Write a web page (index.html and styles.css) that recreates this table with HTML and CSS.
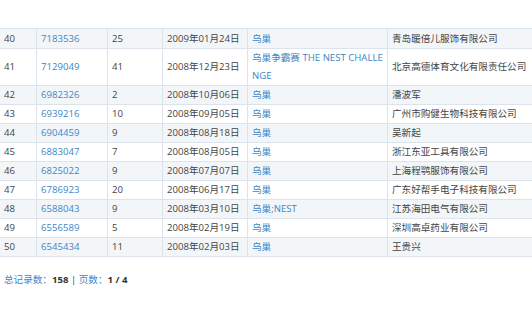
FILE: index.html
```html
<!DOCTYPE html>
<html>
<head>
<meta charset="utf-8">
<link rel="stylesheet" href="styles.css">
</head>
<body>
<table class="grid">
  <colgroup>
    <col class="c1"><col class="c2"><col class="c3"><col class="c4"><col class="c5"><col class="c6">
  </colgroup>
  <tr class="alt"><td>40</td><td><a>7183536</a></td><td>25</td><td>2009年01月24日</td><td><a>乌巢</a></td><td>青岛暖倍儿服饰有限公司</td></tr>
  <tr><td>41</td><td><a>7129049</a></td><td>41</td><td>2008年12月23日</td><td><a>乌巢争霸赛 THE NEST CHALLENGE</a></td><td>北京高德体育文化有限责任公司</td></tr>
  <tr class="alt"><td>42</td><td><a>6982326</a></td><td>2</td><td>2008年10月06日</td><td><a>乌巢</a></td><td>潘波军</td></tr>
  <tr><td>43</td><td><a>6939216</a></td><td>10</td><td>2008年09月05日</td><td><a>乌巢</a></td><td>广州市购健生物科技有限公司</td></tr>
  <tr class="alt"><td>44</td><td><a>6904459</a></td><td>9</td><td>2008年08月18日</td><td><a>乌巢</a></td><td>吴新起</td></tr>
  <tr><td>45</td><td><a>6883047</a></td><td>7</td><td>2008年08月05日</td><td><a>乌巢</a></td><td>浙江东亚工具有限公司</td></tr>
  <tr class="alt"><td>46</td><td><a>6825022</a></td><td>9</td><td>2008年07月07日</td><td><a>乌巢</a></td><td>上海程鹗服饰有限公司</td></tr>
  <tr><td>47</td><td><a>6786923</a></td><td>20</td><td>2008年06月17日</td><td><a>乌巢</a></td><td>广东好帮手电子科技有限公司</td></tr>
  <tr class="alt"><td>48</td><td><a>6588043</a></td><td>9</td><td>2008年03月10日</td><td><a>乌巢;NEST</a></td><td>江苏海田电气有限公司</td></tr>
  <tr><td>49</td><td><a>6556589</a></td><td>5</td><td>2008年02月19日</td><td><a>乌巢</a></td><td>深圳高卓药业有限公司</td></tr>
  <tr class="alt"><td>50</td><td><a>6545434</a></td><td>11</td><td>2008年02月03日</td><td><a>乌巢</a></td><td>王贵兴</td></tr>
</table>
<div class="pager">
  <span class="label">总记录数：</span><b>158</b> | <span class="label">页数：</span><b>1 / 4</b>
</div>
</body>
</html>
```

FILE: styles.css
```css
html, body {
  margin: 0;
  padding: 0;
  background: #fff;
}
body {
  font-family: "Open Sans", "Noto Sans CJK SC", sans-serif;
  font-size: 9.6px;
  color: #444;
  overflow: hidden;
}
.grid {
  border-collapse: collapse;
  table-layout: fixed;
  width: 560px;
  margin: 28px 0 0 -1px;
}
.c1 { width: 37px; }
.c2 { width: 71px; }
.c3 { width: 55px; }
.c4 { width: 85px; }
.c5 { width: 140px; }
.c6 { width: 172px; }
.grid td {
  border: 1px solid #dde3ea;
  padding: 0 4px;
  line-height: 18px;
  height: 18px;
  vertical-align: middle;
  word-break: break-all;
  white-space: normal;
  overflow: hidden;
}
.grid tr:first-child td { height: 19px; }
.grid tr.alt td { background: #f3f6f9; }
.grid a {
  color: #3d86c6;
  text-decoration: none;
}
.pager {
  margin: 14px 0 0 4px;
  line-height: 18px;
  color: #333;
}
.pager .label { color: #3d86c6; }
.pager b { color: #333; font-weight: bold; }
```
